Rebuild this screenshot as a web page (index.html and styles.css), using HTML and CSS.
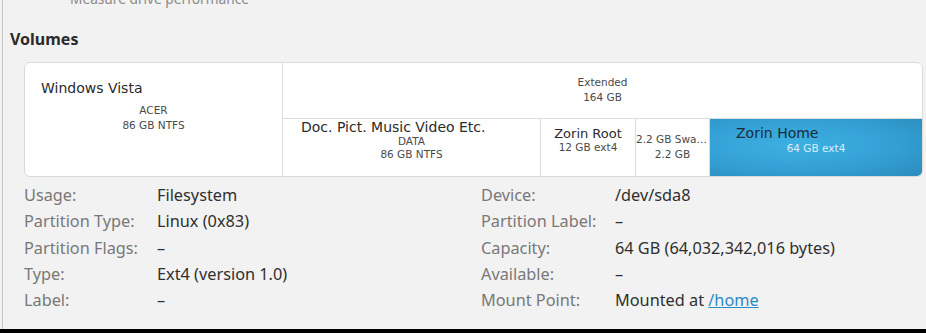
FILE: index.html
```html
<!DOCTYPE html>
<html lang="en">
<head>
    <meta charset="UTF-8">
    <title>Disks - Volumes</title>
    <link rel="stylesheet" href="styles.css">
</head>
<body>
    <div class="window">
        <div class="subtitle">Measure drive performance</div>

        <h2 class="section-title">Volumes</h2>

        <div class="volume-graph">
            <div class="vol vol-primary">
                <div class="vol-name">Windows Vista</div>
                <div class="vol-info">ACER<br>86 GB NTFS</div>
            </div>
            <div class="vol-extended">
                <div class="ext-head">Extended<br>164 GB</div>
                <div class="ext-children">
                    <div class="vol vol-data">
                        <div class="vol-name">Doc. Pict. Music Video Etc.</div>
                        <div class="vol-info">DATA<br>86 GB NTFS</div>
                    </div>
                    <div class="vol vol-root">
                        <div class="vol-name">Zorin Root</div>
                        <div class="vol-info">12 GB ext4</div>
                    </div>
                    <div class="vol vol-swap">
                        <div class="vol-info clip">2.2 GB Swap Partition</div>
                        <div class="vol-info">2.2 GB</div>
                    </div>
                    <div class="vol vol-home">
                        <div class="vol-name">Zorin Home</div>
                        <div class="vol-info">64 GB ext4</div>
                    </div>
                </div>
            </div>
        </div>

        <div class="details">
            <div class="label">Usage:</div>
            <div class="value">Filesystem</div>
            <div class="label">Device:</div>
            <div class="value">/dev/sda8</div>

            <div class="label">Partition Type:</div>
            <div class="value">Linux (0x83)</div>
            <div class="label">Partition Label:</div>
            <div class="value">–</div>

            <div class="label">Partition Flags:</div>
            <div class="value">–</div>
            <div class="label">Capacity:</div>
            <div class="value">64 GB (64,032,342,016 bytes)</div>

            <div class="label">Type:</div>
            <div class="value">Ext4 (version 1.0)</div>
            <div class="label">Available:</div>
            <div class="value">–</div>

            <div class="label">Label:</div>
            <div class="value">–</div>
            <div class="label">Mount Point:</div>
            <div class="value">Mounted at <a href="#">/home</a></div>
        </div>
    </div>
    <div class="taskbar"></div>
</body>
</html>
```

FILE: styles.css
```css
html, body {
    margin: 0;
    padding: 0;
}
body {
    width: 926px;
    height: 333px;
    overflow: hidden;
    display: flex;
    flex-direction: column;
    background-color: #f2f2f2;
    font-family: 'Noto Sans', 'DejaVu Sans', sans-serif;
    color: #333;
}
.window {
    flex: 1;
    margin-left: 2px;
    border-left: 1px solid #c6c6c6;
    overflow: hidden;
}
.taskbar {
    height: 4px;
    background-color: #000;
}
.subtitle {
    margin: -10px 0 0 67px;
    font-size: 13.7px;
    line-height: 18px;
    color: #8a8a8a;
}
.section-title {
    margin: 21px 0 0 7px;
    font-size: 16px;
    line-height: 20px;
    font-weight: bold;
    color: #2b2b2b;
}

/* partition graph */
.volume-graph {
    box-sizing: border-box;
    display: flex;
    width: 899px;
    height: 115px;
    margin: 13px 0 0 21px;
    background-color: #fff;
    border: 1px solid #dadada;
    border-radius: 6px;
    overflow: hidden;
    font-family: 'DejaVu Sans', sans-serif;
}
.vol {
    box-sizing: border-box;
    border-right: 1px solid #dcdcdc;
}
.vol-name {
    font-size: 13px;
    line-height: 14px;
    color: #2a2a2a;
    white-space: nowrap;
}
.vol-info {
    font-size: 10.5px;
    line-height: 12.5px;
    color: #4a4a4a;
    text-align: center;
}
.vol-primary {
    width: 258px;
    padding: 17px 0 0 16px;
}
.vol-primary .vol-name {
    font-size: 14px;
    line-height: 17px;
}
.vol-primary .vol-info {
    margin: 6px 0 0 -16px;
    line-height: 15px;
}
.vol-extended {
    flex: 1;
    display: flex;
    flex-direction: column;
}
.ext-head {
    box-sizing: border-box;
    height: 56px;
    padding-top: 12px;
    border-bottom: 1px solid #dcdcdc;
    font-size: 10.5px;
    line-height: 14.5px;
    color: #4a4a4a;
    text-align: center;
}
.ext-children {
    flex: 1;
    display: flex;
}
.vol-data {
    width: 258px;
    padding: 1px 0 0 18px;
}
.vol-data .vol-name {
    font-size: 14px;
    line-height: 15px;
}
.vol-data .vol-info {
    margin-left: -18px;
}
.vol-root {
    width: 95px;
    padding-top: 8px;
    text-align: center;
}
.vol-swap {
    width: 74px;
    padding-top: 13px;
}
.vol-swap .vol-info {
    line-height: 15px;
}
.clip {
    white-space: nowrap;
    overflow: hidden;
    text-overflow: ellipsis;
}
.vol-home {
    flex: 1;
    border-right: none;
    padding: 6px 0 0 26px;
    background: radial-gradient(ellipse at 40% 45%, #3eb0e2 0%, #33a0d4 55%, #2b8bbd 100%);
}
.vol-home .vol-name {
    font-size: 14px;
    line-height: 17px;
    color: #1b2b3b;
}
.vol-home .vol-info {
    margin: -0.5px 0 0 -26px;
    line-height: 13px;
    color: #d8eef9;
}

/* properties */
.details {
    display: grid;
    grid-template-columns: 133px 324px 134px 1fr;
    grid-auto-rows: 26.3px;
    margin: 5px 0 0 21px;
    font-size: 16.3px;
    line-height: 26.3px;
    white-space: nowrap;
}
.label {
    color: #787878;
}
.value {
    color: #2f2f2f;
}
.value a {
    color: #2a8cc6;
}
```
